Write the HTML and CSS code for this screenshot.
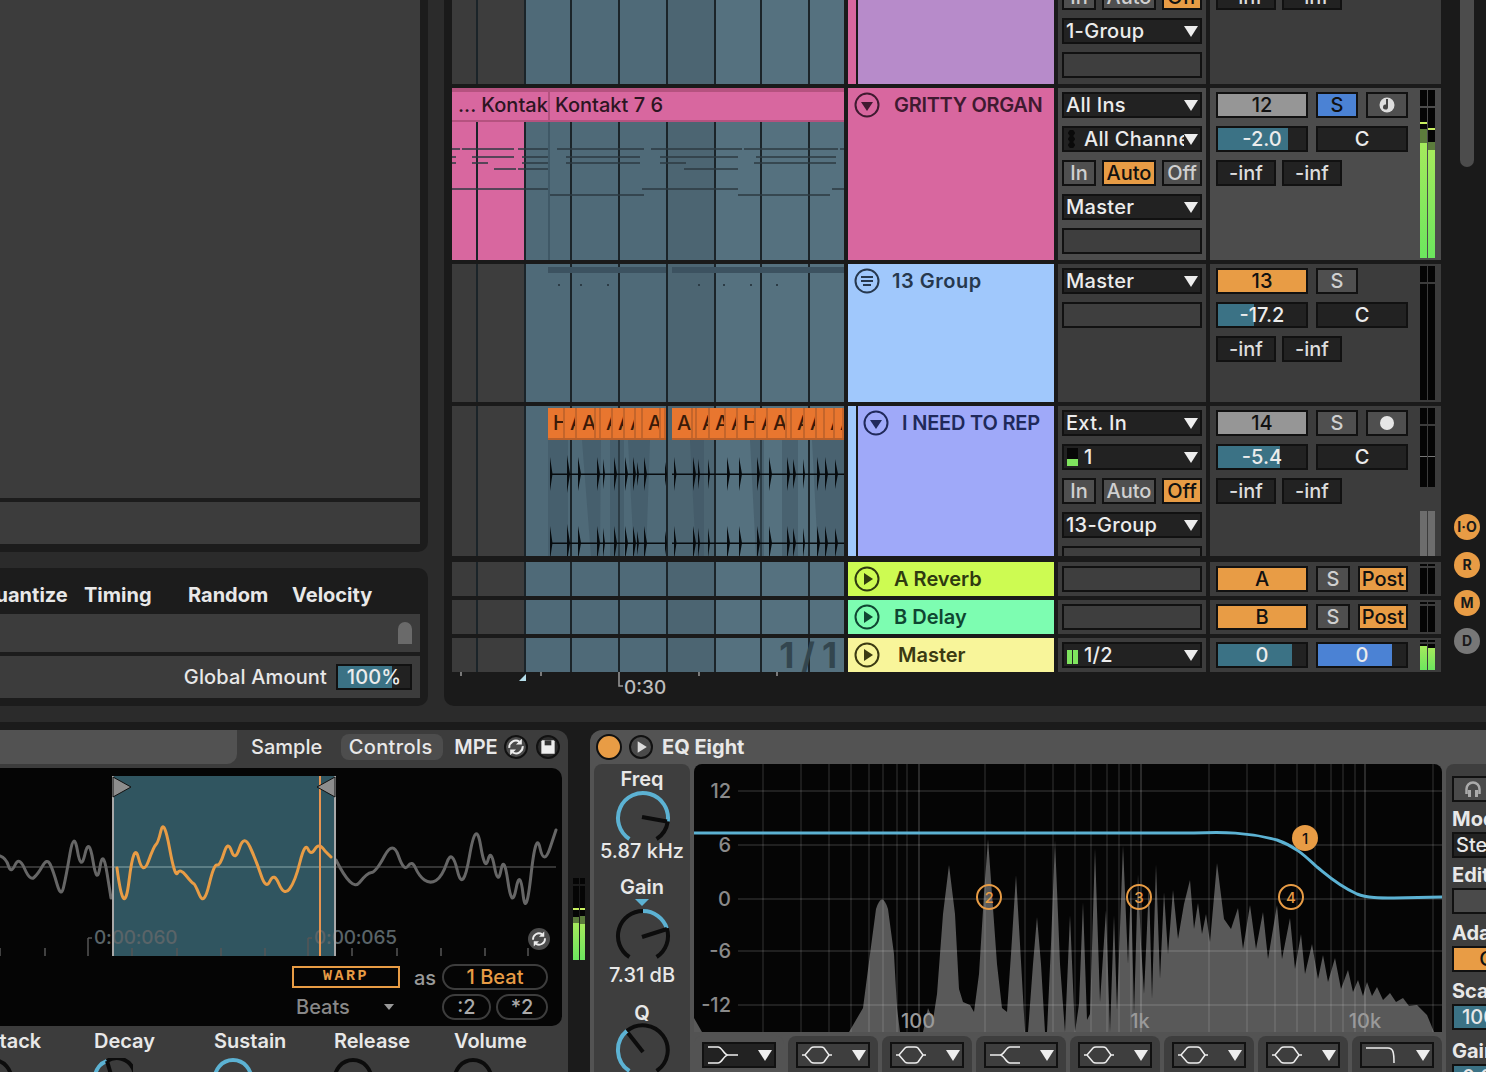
FILE: index.html
```html
<!DOCTYPE html>
<html lang="en">
  <head>
    <meta charset="UTF-8" />
    <meta name="viewport" content="width=device-width, initial-scale=1" />
    <title>Live Set</title>
    <link rel="stylesheet" href="styles.css">
  </head>
  <body>
    <svg class="defs" aria-hidden="true">
      <symbol id="fold-down" viewBox="0 0 26 26">
        <circle cx="13" cy="13" r="11.5" fill="none" stroke="currentColor" stroke-width="2" />
        <path d="M7 10h12l-6 9z" fill="currentColor" />
      </symbol>
      <symbol id="fold-right" viewBox="0 0 26 26">
        <circle cx="13" cy="13" r="11.5" fill="none" stroke="currentColor" stroke-width="2" />
        <path d="M10 7v12l9-6z" fill="currentColor" />
      </symbol>
      <symbol id="fold-group" viewBox="0 0 26 26">
        <circle cx="13" cy="13" r="11.5" fill="none" stroke="currentColor" stroke-width="2" />
        <path d="M7 9h12M7 13h12M9 17h8" fill="none" stroke="currentColor" stroke-width="2" />
      </symbol>
      <symbol id="sync" viewBox="0 0 24 24">
        <path d="M4 13a8 8 0 0 1 12-7.500M20 11a8 8 0 0 1-12 7.500" fill="none" stroke="currentColor" stroke-width="2.400" />
        <path d="M19 2v7h-7zM5 22v-7h7z" fill="currentColor" />
      </symbol>
      <symbol id="f-shelf" viewBox="0 0 30 18">
        <path d="M0 1h10c4 0 6 8 10 8h10M0 17h10c4 0 6-8 10-8" fill="none" stroke="currentColor" stroke-width="1.500" />
      </symbol>
      <symbol id="f-bell" viewBox="0 0 30 18">
        <path d="M0 9h3l6-7c1-1 2-1 3-1h7c1 0 2 0 3 1l5 7h3M3 9l6 7c1 1 2 1 3 1h7c1 0 2 0 3-1l5-7" fill="none" stroke="currentColor" stroke-width="1.500" />
      </symbol>
      <symbol id="f-shelf-r" viewBox="0 0 30 18">
        <path d="M0 9h10c4 0 6-8 10-8h10M10 9c4 0 6 8 10 8h10" fill="none" stroke="currentColor" stroke-width="1.500" />
      </symbol>
      <symbol id="f-low" viewBox="0 0 30 18">
        <path d="M0 2h22c5 0 6 4 6 15" fill="none" stroke="currentColor" stroke-width="1.500" />
      </symbol>
      <symbol id="channel" viewBox="0 0 392 40">
        <path d="M98 19.500h116v1.500H98zM220 19.500h172v1.500H220zM98 3l2.500 17-2.500 17zM115 1l3 19-3 19zM126 3l3 17-3 17zM145 3l3 17-3 17zM151 5l2 15-2 15zM162 3l3 17-3 17zM173 3l3 17-3 17zM181 3l3 17-3 17zM185 8l2 12-2 12zM192 3l3 17-3 17zM213 8l2 12-2 12zM222 3l2.500 17-2.500 17zM241 3l3 17-3 17zM246 5l2 15-2 15zM256 5l2 15-2 15zM275 3l3 17-3 17zM287 3l3 17-3 17zM305 3l3 17-3 17zM317 3l3 17-3 17zM335 3l3 17-3 17zM341 5l3 15-3 15zM351 5l2 15-2 15zM365 3l3 17-3 17zM373 3l3 17-3 17zM383 5l3 15-3 15z" fill="#070b0e" />
      </symbol>
    </svg>

    <div class="top">
      <div class="left-col">
        <div class="left-panel">
          <div class="left-main"></div>
          <div class="left-foot"></div>
        </div>
        <div class="groove">
          <div class="groove-head">
            <span class="gh-q">Quantize</span>
            <span class="gh-t">Timing</span>
            <span class="gh-t">Random</span>
            <span class="gh-v">Velocity</span>
          </div>
          <div class="groove-row"><i class="groove-thumb"></i></div>
          <div class="groove-foot">
            <span>Global Amount</span>
            <div class="box bar-box amount"><i class="bar teal" style="width:54px"></i><b>100%</b></div>
          </div>
        </div>
      </div>

      <div class="arrangement">
        <div class="tracks">
          <!-- cut off by the top of the window -->
          <div class="track first">
            <div class="lane"><i class="cell"></i><i class="cell"></i><i class="cell"></i><i class="cell"></i><i class="cell"></i><i class="cell"></i><i class="cell"></i><i class="cell"></i><i class="cell"></i></div>
            <div class="title nested pink-strip"><div class="title-inner mauve"></div></div>
            <div class="io">
              <div class="box"></div>
              <div class="monitor"><div class="box btn w34">In</div><div class="box btn w54">Auto</div><div class="box btn w40 on">Off</div></div>
              <div class="box drop"><span>1-Group</span></div>
              <div class="box empty"></div>
            </div>
            <div class="mix">
              <div class="mix-controls">
                <div class="mix-row"></div><div class="mix-row"><div class="box inf">-inf</div><div class="box inf">-inf</div></div>
              </div>
              <div class="meter"><div class="meter-bar"><div class="seg"></div></div><div class="meter-bar"><div class="seg"></div></div></div>
            </div>
          </div>

          <div class="track h172">
            <div class="lane">
              <i class="cell pink"></i><i class="cell pink"></i><i class="cell"></i><i class="cell"></i><i class="cell"></i><i class="cell"></i><i class="cell"></i><i class="cell"></i><i class="cell"></i>
              <div class="clip-head">
                <span class="clip-cut">... Kontak</span>
                <span class="clip-name">Kontakt 7 6</span>
              </div>
              <svg class="clip-body" width="392" height="172" viewBox="0 0 392 172">
                <path d="M97 34v138" stroke="#3f5866" stroke-width="2" fill="none" />
                <path d="M0 61h8M10 61h52M66 61h30M105 61h87M199 61h91M292 61h94M388 61h4M0 69h4M20 69h42M70 69h26M114 69h74M208 69h78M304 69h80M0 75h4M20 75h16M70 75h26M114 75h74M208 75h26M302 75h82M42 81h22M66 81h30M232 81h54M0 101h96M190 101h96M380 101h12M98 107h94M286 107h92" stroke="#2d3a42" stroke-width="1.500" fill="none" />
              </svg>
            </div>
            <div class="title pink"><div class="title-top gritty"><svg class="fold"><use href="#fold-down" /></svg><span>GRITTY ORGAN</span></div></div>
            <div class="io selected">
              <div class="box drop"><span>All Ins</span></div>
              <div class="box drop"><i class="dots"></i><span class="ind">All Channels</span></div>
              <div class="monitor"><div class="box btn w34">In</div><div class="box btn w54 on">Auto</div><div class="box btn w40">Off</div></div>
              <div class="box drop"><span>Master</span></div>
              <div class="box empty"></div>
            </div>
            <div class="mix selected">
              <div class="mix-controls">
                <div class="mix-row">
                  <div class="box num">12</div>
                  <div class="box btn w42 solo">S</div>
                  <div class="box btn w42"><svg class="arm" viewBox="0 0 18 18"><circle cx="9" cy="9" r="7.500" fill="#ddd" /><path d="M10 3v8a2.500 2.500 0 1 1-2-2.400V3z" fill="#444" /></svg></div>
                </div>
                <div class="mix-row">
                  <div class="box bar-box w92"><i class="bar teal" style="width:70px"></i><b>-2.0</b></div>
                  <div class="box bar-box w92"><b>C</b></div>
                </div>
                <div class="mix-row"><div class="box inf">-inf</div><div class="box inf">-inf</div></div>
              </div>
              <div class="meter">
                <div class="meter-bar"><div class="seg"></div><div class="seg main"><i class="peak" style="margin-bottom:5px"></i><i class="hold" style="height:14px"></i><i class="level" style="height:115px"></i></div></div>
                <div class="meter-bar"><div class="seg"></div><div class="seg main"><i class="peak" style="margin-bottom:12px"></i><i class="hold" style="height:8px"></i><i class="level" style="height:108px"></i></div></div>
              </div>
            </div>
          </div>

          <div class="track h138">
            <div class="lane">
              <i class="cell"></i><i class="cell"></i><i class="cell"></i><i class="cell"></i><i class="cell"></i><i class="cell"></i><i class="cell"></i><i class="cell"></i><i class="cell"></i>
              <svg class="clip-body" width="392" height="138" viewBox="0 0 392 138">
                <path d="M96 3h118v6H96zM220 3h172v6H220z" fill="#3c5260" />
                <path d="M106 20h2v2h-2zM128 20h2v2h-2zM155 20h2v2h-2zM246 20h2v2h-2zM271 20h2v2h-2zM298 20h2v2h-2zM324 20h2v2h-2z" fill="#2c3c46" />
              </svg>
            </div>
            <div class="title blue"><div class="title-top group"><svg class="fold"><use href="#fold-group" /></svg><span>13 Group</span></div></div>
            <div class="io">
              <div class="box drop"><span>Master</span></div>
              <div class="box empty"></div>
            </div>
            <div class="mix">
              <div class="mix-controls">
                <div class="mix-row"><div class="box num orange">13</div><div class="box btn w42">S</div></div>
                <div class="mix-row">
                  <div class="box bar-box w92"><i class="bar teal" style="width:36px"></i><b>-17.2</b></div>
                  <div class="box bar-box w92"><b>C</b></div>
                </div>
                <div class="mix-row"><div class="box inf">-inf</div><div class="box inf">-inf</div></div>
              </div>
              <div class="meter"><div class="meter-bar"><div class="seg"></div><div class="seg main"></div></div><div class="meter-bar"><div class="seg"></div><div class="seg main"></div></div></div>
            </div>
          </div>

          <div class="track h150">
            <div class="lane">
              <i class="cell"></i><i class="cell"></i><i class="cell"></i><i class="cell"></i><i class="cell"></i><i class="cell"></i><i class="cell"></i><i class="cell"></i><i class="cell"></i>
              <svg class="clip-body" width="392" height="150" viewBox="0 0 392 150">
                <path d="M96 34h20v116H96zM130 34l9 116h9l1-116zM158 34h14v116h-14zM176 34l6 116h12l4-116zM238 34l6 116h8V34zM298 34l6 116h8V34zM330 34h16v116h-16zM360 34l6 116h26V34z" fill="#3d5462" opacity=".5" />
                <use href="#channel" x="0" y="48" width="392" height="40" />
                <use href="#channel" x="0" y="117" width="392" height="40" />
              </svg>
              <div class="slices">
                <div class="slice-clip">
                  <span style="width:17px">H</span><span style="width:12px">A</span><span style="width:19px">A</span><span style="width:5px"></span><span style="width:12px">A</span><span style="width:12px">A</span><span style="width:11px">A</span><span style="width:7px"></span><span style="width:18px">A</span><span style="width:5px"></span>
                </div>
                <div class="slice-clip">
                  <span style="width:21px">A</span><span style="width:4px"></span><span style="width:13px">A</span><span style="width:16px">A</span><span style="width:12px">A</span><span style="width:18px">H</span><span style="width:12px">A</span><span style="width:19px">A</span><span style="width:5px"></span><span style="width:13px">A</span><span style="width:12px">A</span><span style="width:8px"></span><span style="width:10px">A</span><span style="width:9px">A</span>
                </div>
              </div>
            </div>
            <div class="title nested blue-strip"><div class="title-inner periwinkle"><div class="title-top rep"><svg class="fold"><use href="#fold-down" /></svg><span>I NEED TO REP</span></div></div></div>
            <div class="io">
              <div class="box drop"><span>Ext. In</span></div>
              <div class="box drop"><i class="mini"><i style="height:7px"></i></i><span class="ind-s">1</span></div>
              <div class="monitor"><div class="box btn w34">In</div><div class="box btn w54">Auto</div><div class="box btn w40 on">Off</div></div>
              <div class="box drop"><span>13-Group</span></div>
              <div class="box empty"></div>
            </div>
            <div class="mix">
              <div class="mix-controls">
                <div class="mix-row">
                  <div class="box num">14</div>
                  <div class="box btn w42">S</div>
                  <div class="box btn w42"><i class="rec"></i></div>
                </div>
                <div class="mix-row">
                  <div class="box bar-box w92"><i class="bar teal" style="width:62px"></i><b>-5.4</b></div>
                  <div class="box bar-box w92"><b>C</b></div>
                </div>
                <div class="mix-row"><div class="box inf">-inf</div><div class="box inf">-inf</div></div>
              </div>
              <div class="meter tail">
                <div class="meter-bar"><div class="seg"></div><div class="seg main"><i class="tick" style="margin-bottom:30px"></i><i class="gap" style="height:24px"></i><i class="level gray" style="height:45px"></i></div></div>
                <div class="meter-bar"><div class="seg"></div><div class="seg main"><i class="tick" style="margin-bottom:30px"></i><i class="gap" style="height:24px"></i><i class="level gray" style="height:45px"></i></div></div>
              </div>
            </div>
          </div>

          <div class="track h34 first-send">
            <div class="lane"><i class="cell"></i><i class="cell"></i><i class="cell"></i><i class="cell"></i><i class="cell"></i><i class="cell"></i><i class="cell"></i><i class="cell"></i><i class="cell"></i></div>
            <div class="title lime"><div class="title-top send"><svg class="fold"><use href="#fold-right" /></svg><span>A Reverb</span></div></div>
            <div class="io"><div class="box empty"></div></div>
            <div class="mix">
              <div class="mix-controls">
                <div class="mix-row"><div class="box num orange">A</div><div class="box btn w34">S</div><div class="box btn w50 on">Post</div></div>
              </div>
              <div class="meter short"><div class="meter-bar"><div class="seg"></div><div class="seg main"></div></div><div class="meter-bar"><div class="seg"></div><div class="seg main"></div></div></div>
            </div>
          </div>

          <div class="track h34">
            <div class="lane"><i class="cell"></i><i class="cell"></i><i class="cell"></i><i class="cell"></i><i class="cell"></i><i class="cell"></i><i class="cell"></i><i class="cell"></i><i class="cell"></i></div>
            <div class="title mint"><div class="title-top send"><svg class="fold"><use href="#fold-right" /></svg><span>B Delay</span></div></div>
            <div class="io"><div class="box empty"></div></div>
            <div class="mix">
              <div class="mix-controls">
                <div class="mix-row"><div class="box num orange">B</div><div class="box btn w34">S</div><div class="box btn w50 on">Post</div></div>
              </div>
              <div class="meter short"><div class="meter-bar"><div class="seg"></div><div class="seg main"></div></div><div class="meter-bar"><div class="seg"></div><div class="seg main"></div></div></div>
            </div>
          </div>

          <div class="track h34">
            <div class="lane">
              <i class="cell"></i><i class="cell"></i><i class="cell"></i><i class="cell"></i><i class="cell"></i><i class="cell"></i><i class="cell"></i><i class="cell"></i><i class="cell"></i>
              <span class="loop-len">1/1</span>
            </div>
            <div class="title butter"><div class="title-top send master"><svg class="fold"><use href="#fold-right" /></svg><span>Master</span></div></div>
            <div class="io">
              <div class="box drop"><i class="mini pair"><i style="height:14px"></i><i style="height:14px"></i></i><span class="ind-s">1/2</span></div>
            </div>
            <div class="mix">
              <div class="mix-controls">
                <div class="mix-row">
                  <div class="box bar-box w92"><i class="bar teal" style="width:74px"></i><b>0</b></div>
                  <div class="box bar-box w92"><i class="bar azure" style="width:74px"></i><b>0</b></div>
                </div>
              </div>
              <div class="meter short">
                <div class="meter-bar"><div class="seg"></div><div class="seg main"><i class="level" style="height:24px"></i></div></div>
                <div class="meter-bar"><div class="seg"></div><div class="seg main"><i class="level" style="height:22px"></i></div></div>
              </div>
            </div>
          </div>

          <svg class="ruler" width="392" height="34" viewBox="0 0 392 34">
            <path d="M9 0v4M89 0v4M247 0v4M325 0v4" stroke="#9a9a9a" stroke-width="1.500" />
            <path d="M167 0v14h4" stroke="#9a9a9a" stroke-width="1.500" fill="none" />
            <path d="M74 2v7h-7z" fill="#b5dde9" />
            <text x="172" y="22" class="ruler-text">0:30</text>
          </svg>
        </div>

        <div class="side">
          <div class="scroll-thumb"></div>
          <div class="side-btns">
            <div class="side-btn">I·O</div>
            <div class="side-btn">R</div>
            <div class="side-btn">M</div>
            <div class="side-btn off">D</div>
          </div>
        </div>
      </div>
    </div>

    <div class="devices">
      <div class="sampler">
        <div class="dev-tabs">
          <div class="tab-fill"></div>
          <div class="tab-sample">Sample</div>
          <div class="tab-pill">Controls</div>
          <div class="tab-mpe">MPE</div>
          <div class="round-btn"><svg viewBox="0 0 24 24"><use href="#sync" /></svg></div>
          <div class="round-btn save"><svg viewBox="0 0 24 24"><path d="M5 4h14l1 1v15H4V5z" fill="#eee" /><path d="M8 4h8v6H8z" fill="#333" /></svg></div>
        </div>
        <div class="wave-panel">
          <svg class="wave" width="562" height="188" viewBox="0 0 562 188">
            <rect x="113" y="8" width="222" height="180" fill="#305560" />
            <path d="M0 99h113M335 99h221" stroke="#444" stroke-width="1.500" />
            <path d="M113 99h222" stroke="#6b8c92" stroke-width="1.500" />
            <path d="M0 180v8M45 180v8M88 170v18M88 170h4M132 180v8M177 180v8M221 180v8M265 180v8M308 170v18M308 170h4M352 180v8M397 180v8M441 180v8M485 180v8M528 180v8" stroke="#555" stroke-width="1.500" fill="none" />
            <text x="94" y="176" class="wave-time">0:00:060</text>
            <text x="314" y="176" class="wave-time">0:00:065</text>
            <path d="M0 88Q6 90 8.500 98Q11 106 15 97Q19 88 24.500 100.500Q30 113 34 109.500Q38 106 42.500 98Q47 90 50 96Q53 102 57 116Q61 130 63.500 119.500Q66 109 70 85.500Q74 62 77.500 83Q81 104 85 86Q89 68 93 93Q97 118 100 99Q103 80 107 105L111 130" class="wave-off" />
            <path d="M336 92Q352 124 359.500 114.500Q367 105 371.500 104.500Q376 104 384.500 88Q393 72 398.500 88Q404 104 408 98Q412 92 415.500 100Q419 108 424.500 112Q430 116 436 112.500Q442 109 447 94.500Q452 80 457.500 103Q463 126 469.500 88Q476 50 480.500 77Q485 104 488 92Q491 80 494.500 99Q498 118 501 102Q504 86 508 114Q512 142 516 121Q520 100 523 126Q526 152 531 107Q536 62 540 80Q544 98 550 80L556 62" class="wave-off" />
            <path d="M117 100Q124 154 129 113Q134 72 138.500 90Q143 108 148.500 93Q154 78 156 76.500Q158 75 161 62.500Q164 50 169.500 80Q175 110 177.500 105Q180 100 186 107.500Q192 115 193.500 115.500Q195 116 199.500 127Q204 138 209 117Q214 96 217 97Q220 98 224 85Q228 72 231.500 83Q235 94 239.500 80Q244 66 250 79Q256 92 261 107Q266 122 270 113Q274 104 279 116Q284 128 289.500 121Q295 114 300 94Q305 74 308 81Q311 88 315 81Q319 74 325 83L331 89" class="wave-on" />
            <path d="M320 8v180" stroke="#e8944f" stroke-width="2" />
            <path d="M113 8v180M335 8v180" stroke="#a8a8a8" stroke-width="2" />
            <path d="M113 9l18 10-18 10zM335 9l-18 10 18 10z" fill="#8d8d8d" stroke="#111" />
            <circle cx="539" cy="171" r="11" fill="#4c4c4c" />
            <svg x="530" y="162" width="18" height="18" viewBox="0 0 24 24" color="#eee"><use href="#sync" /></svg>
          </svg>
          <div class="warp-grid">
            <div class="warp">WARP</div>
            <div class="warp-as">as</div>
            <div class="pill beat">1 Beat</div>
            <div class="beats"><span>Beats</span><i></i></div>
            <div class="pills">
              <div class="pill half">:2</div>
              <div class="pill dbl">*2</div>
            </div>
          </div>
        </div>
        <div class="adsr">
          <div class="env env-a"><span>Attack</span>
            <svg class="knob-s" viewBox="0 0 40 40"><path d="M10.200 35.100A18 18 0 1 1 29.800 35.100" class="k-off" /></svg>
          </div>
          <div class="env"><span>Decay</span>
            <svg class="knob-s" viewBox="0 0 40 40"><path d="M10.200 35.100A18 18 0 0 1 14 3" class="k-on" /><path d="M14 3A18 18 0 1 1 29.800 35.100" class="k-off" /><path d="M19 20L14 3" class="k-off" /></svg>
          </div>
          <div class="env"><span>Sustain</span>
            <svg class="knob-s" viewBox="0 0 40 40"><path d="M10.200 35.100A18 18 0 1 1 29.800 35.100" class="k-on" /></svg>
          </div>
          <div class="env"><span>Release</span>
            <svg class="knob-s" viewBox="0 0 40 40"><path d="M10.200 35.100A18 18 0 1 1 29.800 35.100" class="k-off" /></svg>
          </div>
          <div class="env"><span>Volume</span>
            <svg class="knob-s" viewBox="0 0 40 40"><path d="M10.200 35.100A18 18 0 1 1 29.800 35.100" class="k-off" /></svg>
          </div>
        </div>
      </div>

      <div class="dev-meter">
        <div class="meter-bar thin"><div class="seg"></div><div class="seg main"><i class="peak" style="margin-bottom:7px"></i><i class="hold" style="height:6px"></i><i class="level" style="height:37px"></i></div></div>
        <div class="meter-bar thin"><div class="seg"></div><div class="seg main"><i class="peak" style="margin-bottom:6px"></i><i class="hold" style="height:8px"></i><i class="level" style="height:36px"></i></div></div>
      </div>

      <div class="eq">
        <div class="eq-head">
          <div class="eq-power"></div>
          <div class="round-btn play"><svg viewBox="0 0 24 24"><path d="M8 5v14l11-7z" fill="#ddd" /></svg></div>
          <span class="eq-name">EQ Eight</span>
        </div>
        <div class="eq-body">
          <div class="eq-knobs">
            <span class="k-label">Freq</span>
            <svg class="knob" viewBox="0 0 56 56"><path d="M14.400 49A25 25 0 1 1 52.750 31.500" class="k-on" /><path d="M52.750 31.500A25 25 0 0 1 41.600 49" class="k-off" /><path d="M27 27L52 31.500" class="k-needle" /></svg>
            <span class="k-value freq-v">5.87 kHz</span>
            <span class="k-label gain">Gain</span>
            <i class="k-mark"></i>
            <svg class="knob" viewBox="0 0 56 56"><path d="M14.400 49A25 25 0 0 1 28 3" class="k-off" /><path d="M28 3A25 25 0 0 1 51.800 20.300" class="k-on" /><path d="M51.800 20.300A25 25 0 0 1 41.600 49" class="k-off" /><path d="M27 29L52 21" class="k-needle" /></svg>
            <span class="k-value gain-v">7.31 dB</span>
            <span class="k-label q">Q</span>
            <svg class="knob" viewBox="0 0 56 56"><path d="M14.400 49A25 25 0 0 1 11.900 8.850" class="k-on" /><path d="M11.900 8.850A25 25 0 1 1 41.600 49" class="k-off" /><path d="M28 30L13 11" class="k-needle" /></svg>
          </div>

          <div class="eq-center">
            <svg class="eq-graph" width="748" height="268" viewBox="0 0 748 268">
              <path d="M0 268V254L8 268H155L169 244L176 190L182 145Q188 126 194 145L200 190L203 244L206 268H229L234 244L239 256L243 230L249 150L255 101L261 150L265 225L269 238L276 241L280 248L285 210L290 130L294 75L298 130L303 200L308 244L313 248L317 190L322 111L326 180L331 268H334L339 200L343 153L347 200L351 268H353L357 180L361 76L366 200L371 268L376 151L381 268L385 240L389 138L393 256L396 250L401 84L406 238L412 146L416 268L420 151L423 246L429 81L434 200L437 120L440 250L444 110L447 180L450 230L455 120L458 235L462 100L466 215L470 128L474 190L479 126L484 175L490 140L496 116L500 165L504 139L508 170L512 150L516 178L523 99L530 155L537 165L544 144L549 185L556 141L562 185L569 148L574 195L583 141L588 195L596 154L601 205L607 170L611 210L618 180L624 215L629 191L634 218L641 194L647 225L654 206L659 228L664 216L669 232L673 218L678 232L683 223L689 236L696 229L702 238L709 234L715 242L723 241L733 251L740 268Z" fill="#595959" />
              <path d="M69 0v268M107 0v268M135 0v268M157 0v268M175 0v268M189 0v268M203 0v268M213 0v268M291 0v268M331 0v268M359 0v268M381 0v268M397 0v268M413 0v268M425 0v268M437 0v268M515 0v268M553 0v268M581 0v268M603 0v268M621 0v268M637 0v268M649 0v268M661 0v268M739 0v268" stroke="#fff" stroke-opacity=".13" stroke-width="1.500" />
              <path d="M225 0v268M447 0v268M671 0v268" stroke="#fff" stroke-opacity=".2" stroke-width="1.500" />
              <path d="M44 27h704M44 81h704M44 135h704M44 187h704M44 241h704" stroke="#fff" stroke-opacity=".15" stroke-width="1.500" />
              <text x="37" y="34" class="eq-db">12</text>
              <text x="37" y="88" class="eq-db">6</text>
              <text x="37" y="142" class="eq-db">0</text>
              <text x="37" y="194" class="eq-db">-6</text>
              <text x="37" y="248" class="eq-db">-12</text>
              <text x="224" y="264" class="eq-hz">100</text>
              <text x="446" y="264" class="eq-hz">1k</text>
              <text x="671" y="264" class="eq-hz">10k</text>
              <path d="M0 69H500C530 68 553 68 583 76C603 83 613 94 623 103C633 111 643 121 663 130C673 134 686 134 700 134L748 133" fill="none" stroke="#5cb2d3" stroke-width="3" />
              <circle cx="611" cy="74" r="13" fill="#e89c45" />
              <text x="611" y="80" class="eq-dot dark">1</text>
              <circle cx="295" cy="133" r="12" class="eq-ring" /><text x="295" y="139" class="eq-dot">2</text>
              <circle cx="445" cy="133" r="12" class="eq-ring" /><text x="445" y="139" class="eq-dot">3</text>
              <circle cx="597" cy="133" r="12" class="eq-ring" /><text x="597" y="139" class="eq-dot">4</text>
            </svg>
            <div class="f-tabs">
              <div class="f-tab active"><div class="f-box"><svg class="f-ic"><use href="#f-shelf" /></svg></div></div>
              <div class="f-tab"><div class="f-box"><svg class="f-ic"><use href="#f-bell" /></svg></div></div>
              <div class="f-tab"><div class="f-box"><svg class="f-ic"><use href="#f-bell" /></svg></div></div>
              <div class="f-tab"><div class="f-box"><svg class="f-ic"><use href="#f-shelf-r" /></svg></div></div>
              <div class="f-tab"><div class="f-box"><svg class="f-ic"><use href="#f-bell" /></svg></div></div>
              <div class="f-tab"><div class="f-box"><svg class="f-ic"><use href="#f-bell" /></svg></div></div>
              <div class="f-tab"><div class="f-box"><svg class="f-ic"><use href="#f-bell" /></svg></div></div>
              <div class="f-tab"><div class="f-box"><svg class="f-ic"><use href="#f-low" /></svg></div></div>
            </div>
          </div>

          <div class="eq-side">
            <div class="side-box hp"><svg width="20" height="20" viewBox="0 0 20 20"><path d="M3.500 15V10a6.500 6.500 0 0 1 13 0v5" fill="none" stroke="#aaa" stroke-width="2.500" /><path d="M5 11h3v7H5zM12 11h3v7h-3z" fill="#aaa" /></svg></div>
            <span class="side-label">Mode</span>
            <div class="side-box dark">Stereo</div>
            <span class="side-label">Edit</span>
            <div class="side-box"></div>
            <span class="side-label tall">Adapt. Q</span>
            <div class="side-box amber">On</div>
            <span class="side-label tall">Scale</span>
            <div class="side-box tealish">100 %</div>
            <span class="side-label taller">Gain</span>
            <div class="side-box tealish">0.00 dB</div>
          </div>
        </div>
      </div>
    </div>
  </body>
</html>
```

FILE: styles.css
```css
* {
  box-sizing: border-box;
}
html,
body {
  margin: 0;
  height: 100%;
}
body {
  width: 1486px;
  height: 1072px;
  overflow: hidden;
  background: #2b2b2b;
  color: #e8e8e8;
  font-family: Inter, "Noto Sans", sans-serif;
  font-size: 20px;
  font-weight: 500;
  line-height: 26px;
}
i {
  display: block;
  font-style: normal;
}
.defs {
  position: absolute;
  width: 0;
  height: 0;
}

/* top half */
.top {
  display: flex;
  gap: 16px;
  height: 722px;
}
.left-col {
  width: 428px;
  flex: none;
  display: flex;
  flex-direction: column;
  gap: 16px;
}
.left-panel {
  height: 552px;
  background: #1c1c1c;
  padding: 0 8px 8px 0;
  border-bottom-right-radius: 10px;
  display: flex;
  flex-direction: column;
  gap: 4px;
}
.left-main {
  height: 498px;
  background: #3c3c3c;
}
.left-foot {
  flex: 1;
  background: #3c3c3c;
}
.groove {
  height: 138px;
  background: #1c1c1c;
  padding: 8px 8px 8px 0;
  border-radius: 0 10px 10px 0;
  display: flex;
  flex-direction: column;
}
.groove-head {
  height: 38px;
  display: flex;
  align-items: center;
  justify-content: flex-end;
  font-weight: 700;
}
.gh-q {
  width: 84px;
  flex: none;
  white-space: nowrap;
  margin-right: 20px;
  direction: rtl;
  unicode-bidi: plaintext;
  text-align: right;
}
.gh-t {
  width: 104px;
  flex: none;
}
.gh-v {
  width: 128px;
  flex: none;
}
.groove-row {
  height: 38px;
  background: #3c3c3c;
  display: flex;
  justify-content: flex-end;
  align-items: flex-end;
  padding: 0 8px 8px 0;
}
.groove-thumb {
  width: 14px;
  height: 22px;
  background: #6a6a6a;
  border-radius: 7px 7px 0 0;
}
.groove-foot {
  height: 42px;
  margin-top: 4px;
  background: #3c3c3c;
  display: flex;
  justify-content: flex-end;
  align-items: center;
  gap: 9px;
  padding-right: 8px;
  letter-spacing: 0.15px;
}

/* arrangement */
.arrangement {
  flex: 1;
  height: 706px;
  background: #1a1a1a;
  padding-left: 8px;
  border-bottom-left-radius: 10px;
  display: flex;
  overflow: hidden;
}
.tracks {
  display: flex;
  flex-direction: column;
  gap: 4px;
  width: 989px;
  flex: none;
}
.track {
  display: grid;
  grid-template-columns: 392px 206px 148px 231px;
  column-gap: 4px;
  flex: none;
  overflow: hidden;
}
.first {
  height: 138px;
  margin-top: -54px;
}
.h172 {
  height: 172px;
}
.h138 {
  height: 138px;
}
.h150 {
  height: 150px;
}
.h34 {
  height: 34px;
}
.first-send {
  margin-top: 2px;
}
.ruler {
  margin-top: -4px;
  flex: none;
}
.ruler-text {
  font: 500 19px Inter, sans-serif;
  fill: #bdbdbd;
}

.lane {
  position: relative;
  display: flex;
  overflow: hidden;
}
.cell {
  flex: none;
  height: 100%;
  background: #4f6a78;
  border-right: 2px solid #1b2429;
}
.cell:nth-child(1) {
  width: 26px;
  background: #3b3b3b;
}
.cell:nth-child(2) {
  width: 48px;
  background: #3d3d3d;
}
.cell:nth-child(3) {
  width: 46px;
}
.cell:nth-child(4),
.cell:nth-child(5) {
  width: 48px;
}
.cell:nth-child(6) {
  width: 48px;
  background: #4c6572;
}
.cell:nth-child(7) {
  width: 46px;
  background: #55717f;
}
.cell:nth-child(8) {
  width: 48px;
  background: #55717f;
}
.cell:nth-child(9) {
  width: 34px;
  background: #55717f;
  border-right: 0;
}
.cell.pink {
  background: #d8679f;
}
.clip-head {
  position: absolute;
  left: 0;
  right: 0;
  top: 0;
  height: 34px;
  display: flex;
  background: #d8679f;
  border-top: 4px solid #b5527f;
  border-bottom: 2px solid #b5527f;
  color: #2c1522;
  line-height: 26px;
}
.clip-cut {
  width: 98px;
  flex: none;
  padding-left: 6px;
  overflow: hidden;
  white-space: nowrap;
  border-right: 2px solid #b5527f;
}
.clip-name {
  padding-left: 5px;
}
.clip-body {
  position: absolute;
  left: 0;
  top: 0;
}
.slices {
  position: absolute;
  left: 96px;
  top: 2px;
  right: 0;
  display: flex;
  gap: 6px;
}
.slice-clip {
  display: flex;
  height: 32px;
  background: #e8762f;
  border-bottom: 2px solid #b85f2a;
  color: #3a1a08;
  line-height: 30px;
  flex: none;
}
.slice-clip span {
  flex: none;
  overflow: hidden;
  text-indent: 5px;
  white-space: nowrap;
  border-right: 2px solid #c4652b;
}
.loop-len {
  position: absolute;
  right: 7px;
  top: 0;
  font-size: 35px;
  line-height: 34px;
  font-weight: 700;
  letter-spacing: 7px;
  margin-right: -7px;
  color: #33464f;
}

/* track titles */
.title {
  position: relative;
  overflow: visible;
}
.title-top {
  height: 34px;
  display: flex;
  align-items: center;
  gap: 14px;
  padding-left: 6px;
  white-space: nowrap;
  font-weight: 600;
}
.fold {
  width: 26px;
  height: 26px;
  flex: none;
}
.pink {
  background: #d8679f;
}
.blue {
  background: #a0c8fc;
}
.lime {
  background: #cdfb52;
}
.mint {
  background: #7dfdb1;
}
.butter {
  background: #f8f59a;
}
.mauve {
  background: #b78bca;
}
.periwinkle {
  background: #9fa9f9;
}
.pink-strip {
  background: #d8679f;
}
.blue-strip {
  background: #a0c8fc;
}
.nested {
  padding-left: 8px;
}
.blue-strip::before {
  content: "";
  position: absolute;
  left: 0;
  top: -4px;
  width: 8px;
  height: 4px;
  background: #a0c8fc;
}
.title-inner {
  height: 100%;
  border-left: 2px solid #1a1a1a;
}
.gritty {
  color: #3f1a30;
  letter-spacing: -0.3px;
}
.group {
  color: #26384e;
  letter-spacing: 0.5px;
}
.group .fold {
  margin-right: -2px;
}
.rep {
  color: #20295a;
  padding-left: 5px;
  gap: 13px;
  letter-spacing: -0.2px;
}
.send {
  color: #2f3a10;
}
.mint .send {
  color: #0f4632;
}
.master {
  color: #3b3a12;
  gap: 18px;
}

/* boxes */
.box {
  height: 26px;
  border: 2px solid #111;
  background: #222;
  line-height: 22px;
  flex: none;
}
.empty {
  background: #3e3e3e;
}
.drop {
  display: flex;
  align-items: center;
  padding: 0 2px 0 2px;
  color: #ececec;
  white-space: nowrap;
  position: relative;
  letter-spacing: 0.3px;
}
.drop span {
  flex: 1;
  min-width: 0;
  overflow: hidden;
}
.drop::after {
  content: "";
  flex: none;
  width: 0;
  height: 0;
  border-left: 7px solid transparent;
  border-right: 7px solid transparent;
  border-top: 11px solid #eee;
}
.drop .ind {
  padding-left: 5px;
}
.drop .ind-s {
  padding-left: 6px;
}
.dots {
  width: 9px;
  height: 18px;
  margin-left: 1px;
  flex: none;
  background: radial-gradient(circle, #0a0a0a 3px, transparent 3.5px) 0 0 / 9px 6px;
  margin-right: 3px;
}
.mini {
  width: 11px;
  height: 18px;
  flex: none;
  margin-left: 1px;
  background: #070707;
  display: flex;
  gap: 1px;
  align-items: flex-end;
}
.mini i {
  flex: 1;
  background: #7fe45e;
}
.mini.pair {
  background: none;
}
.io {
  background: #3c3c3c;
  padding: 4px;
  display: flex;
  flex-direction: column;
  gap: 8px;
  overflow: hidden;
}
.selected {
  background: #4c4c4c;
}
.monitor {
  display: flex;
  gap: 6px;
  flex: none;
}
.btn {
  background: #4f4f4f;
  color: #d0d0d0;
  text-align: center;
  display: flex;
  align-items: center;
  justify-content: center;
}
.btn.on {
  background: #e89c45;
  color: #111;
}
.btn.solo {
  background: #4b82d4;
  color: #111;
}
.w34 {
  width: 34px;
}
.w40 {
  width: 40px;
}
.w42 {
  width: 42px;
}
.w50 {
  width: 50px;
}
.w54 {
  width: 54px;
}
.w92 {
  width: 92px;
}

/* mixer */
.mix {
  background: #3c3c3c;
  padding: 4px 6px;
  display: flex;
  justify-content: space-between;
}
.mix.selected {
  background: #4c4c4c;
}
.mix-controls {
  width: 192px;
  flex: none;
  display: flex;
  flex-direction: column;
  gap: 8px;
}
.mix-row {
  height: 26px;
  display: flex;
  gap: 8px;
  flex: none;
}
.num {
  width: 92px;
  background: #969696;
  color: #111;
  text-align: center;
}
.num.orange {
  background: #e89c45;
}
.inf {
  width: 60px;
  color: #ddd;
  text-align: center;
  margin-right: -2px;
}
.bar-box {
  position: relative;
  display: flex;
  align-items: center;
  justify-content: center;
}
.bar-box b {
  position: relative;
  font-weight: 500;
  color: #ececec;
}
.bar {
  position: absolute;
  left: 0;
  top: 0;
  bottom: 0;
}
.teal {
  background: #3b7285;
}
.azure {
  background: #4b82d4;
}
.amount {
  width: 76px;
}
.arm {
  width: 18px;
  height: 18px;
}
.rec {
  width: 14px;
  height: 14px;
  border-radius: 50%;
  background: #e6e6e6;
}
.meter {
  width: 15px;
  flex: none;
  display: flex;
  gap: 1px;
  margin: -2px 0;
}
.meter.tail {
  margin-bottom: -4px;
}
.meter-bar {
  flex: 1;
  display: flex;
  flex-direction: column;
  gap: 2px;
}
.seg {
  height: 16px;
  background: #050505;
  flex: none;
}
.short .seg {
  height: 2px;
}
.seg.main {
  flex: 1;
  display: flex;
  flex-direction: column;
  justify-content: flex-end;
}
.peak {
  height: 2px;
  background: #c8f060;
}
.hold {
  background: #5c7c3c;
}
.level {
  background: linear-gradient(#a5ea5c, #6ce65e);
}
.level.gray {
  background: #6d6d6d;
}
.gap {
  background: #3c3c3c;
}
.tick {
  height: 1px;
  background: #777;
}
.first .meter {
  margin-bottom: 0;
}

/* right hand column */
.side {
  width: 26px;
  flex: none;
  margin-left: 13px;
  display: flex;
  flex-direction: column;
  align-items: center;
}
.scroll-thumb {
  width: 14px;
  height: 167px;
  background: #4c4c4c;
  border-radius: 0 0 7px 7px;
}
.side-btns {
  margin-top: 347px;
  display: flex;
  flex-direction: column;
  gap: 12px;
}
.side-btn {
  width: 26px;
  height: 26px;
  border-radius: 50%;
  background: #e89c45;
  color: #1a1a1a;
  text-align: center;
  font-size: 14px;
  font-weight: 700;
  white-space: nowrap;
}
.side-btn.off {
  background: #777;
}

/* devices */
.devices {
  height: 350px;
  background: #1b1b1b;
  padding-top: 8px;
  display: flex;
  overflow: hidden;
}
.sampler {
  width: 568px;
  flex: none;
  background: #3c3c3c;
  border-top-right-radius: 12px;
}
.dev-tabs {
  height: 38px;
  display: flex;
  align-items: flex-start;
}
.tab-fill {
  width: 238px;
  height: 34px;
  background: #525252;
  border-bottom-right-radius: 10px;
}
.tab-sample {
  width: 98px;
  padding: 4px 0 0 14px;
}
.tab-pill {
  width: 103px;
  height: 26px;
  margin: 4px 11px 0 6px;
  padding-left: 8px;
  background: #4d4d4d;
  border-radius: 8px;
  letter-spacing: 0.4px;
  white-space: nowrap;
}
.tab-mpe {
  width: 50px;
  padding-top: 4px;
  font-weight: 600;
}
.round-btn {
  width: 24px;
  height: 24px;
  flex: none;
  border-radius: 50%;
  border: 2px solid #111;
  background: #4a4a4a;
  color: #eee;
  margin: 5px 8px 0 0;
}
.round-btn svg {
  display: block;
  width: 20px;
  height: 20px;
}
.save {
  background: #2c2c2c;
}
.wave-panel {
  width: 562px;
  height: 258px;
  background: #050505;
  border-radius: 0 10px 10px 0;
}
.wave {
  display: block;
}
.wave-time {
  font: 500 19px Inter, sans-serif;
  fill: #5a6468;
  letter-spacing: -0.2px;
}
.wave-off,
.wave-on {
  fill: none;
  stroke-width: 3;
  stroke-linejoin: round;
  stroke-linecap: round;
}
.wave-off {
  stroke: #666;
}
.wave-on {
  stroke: #e89c45;
}
.warp-grid {
  margin: 8px 0 0 292px;
  width: 256px;
  display: grid;
  grid-template-columns: 108px 42px 106px;
  grid-template-rows: 26px 26px;
  row-gap: 4px;
}
.warp {
  height: 22px;
  align-self: center;
  border: 2px solid #e89c45;
  color: #e89c45;
  font: 700 15px/18px "Liberation Mono", monospace;
  letter-spacing: 2.500px;
  text-align: center;
}
.warp-as {
  color: #999;
  padding: 1px 0 0 14px;
}
.pill {
  border: 2px solid #3d3d3d;
  border-radius: 13px;
  text-align: center;
  line-height: 22px;
  color: #aaa;
}
.beat {
  color: #e89c45;
}
.beats {
  grid-column: 1 / 3;
  display: flex;
  align-items: center;
  padding-left: 4px;
  color: #888;
}
.beats span {
  width: 88px;
}
.beats i {
  width: 0;
  height: 0;
  border-left: 5px solid transparent;
  border-right: 5px solid transparent;
  border-top: 6px solid #999;
}
.pills {
  display: flex;
  gap: 5px;
}
.half {
  width: 49px;
}
.dbl {
  width: 52px;
}
.adsr {
  display: flex;
  margin-left: -26px;
  padding-top: 2px;
  font-weight: 600;
}
.env {
  width: 120px;
  flex: none;
  display: flex;
  flex-direction: column;
  align-items: flex-start;
}
.env span {
  height: 24px;
  margin-bottom: 6px;
}
.env-a span {
  padding-left: 5px;
}
.knob-s {
  width: 40px;
  height: 40px;
  margin-left: -1px;
}
.k-on,
.k-off,
.k-needle {
  fill: none;
  stroke-width: 4;
}
.k-on {
  stroke: #5cb2d3;
}
.k-off,
.k-needle {
  stroke: #0c0c0c;
}
.dev-meter {
  width: 22px;
  flex: none;
  display: flex;
  gap: 1px;
  padding: 148px 5px 0 5px;
  height: 230px;
}
.thin .seg {
  height: 6px;
}
.thin .seg.main {
  height: auto;
}

/* EQ */
.eq {
  flex: 1;
  min-width: 0;
  background: #535353;
  border-top-left-radius: 12px;
  overflow: hidden;
}
.eq-head {
  height: 34px;
  display: flex;
  align-items: center;
  padding-left: 6px;
  gap: 7px;
}
.eq-power {
  width: 26px;
  height: 26px;
  border-radius: 50%;
  border: 2px solid #111;
  background: #e89c45;
  flex: none;
}
.play {
  width: 24px;
  height: 24px;
  margin: 0;
}
.eq-name {
  font-weight: 700;
  margin-left: 2px;
}
.eq-body {
  display: flex;
  gap: 4px;
  padding-left: 4px;
  height: 316px;
}
.eq-knobs {
  width: 96px;
  flex: none;
  background: #3e3e3e;
  border-radius: 8px 8px 0 0;
  display: flex;
  flex-direction: column;
  align-items: center;
  padding-top: 2px;
}
.k-label {
  height: 26px;
  flex: none;
  font-weight: 600;
}
.k-label.gain {
  margin-top: 10px;
}
.k-label.q {
  margin-top: 12px;
}
.k-mark {
  width: 0;
  height: 0;
  flex: none;
  border-left: 7px solid transparent;
  border-right: 7px solid transparent;
  border-top: 7px solid #5cb2d3;
  margin-top: -1px;
}
.knob {
  width: 56px;
  height: 56px;
  flex: none;
  margin-left: 2px;
}
.k-label + .knob {
  margin-top: -2px;
}
.k-label.q + .knob {
  margin-top: -4px;
}
.k-mark + .knob {
  margin-top: 2px;
}
.k-value {
  height: 26px;
  flex: none;
  white-space: nowrap;
}
.freq-v {
  margin-top: -8px;
}
.gain-v {
  margin-top: -2px;
}
.eq-center {
  width: 748px;
  flex: none;
}
.eq-graph {
  display: block;
  background: #050505;
  border-radius: 8px 8px 0 0;
}
.eq-db {
  font: 500 20px Inter, sans-serif;
  fill: #8a8a8a;
  text-anchor: end;
}
.eq-hz {
  font: 500 20px Inter, sans-serif;
  fill: #9a9a9a;
  text-anchor: middle;
}
.eq-ring {
  fill: none;
  stroke: #e89c45;
  stroke-width: 2;
}
.eq-dot {
  font: 500 15px Inter, sans-serif;
  fill: #e89c45;
  text-anchor: middle;
}
.eq-dot.dark {
  fill: #111;
}
.f-tabs {
  display: flex;
  gap: 4px;
  margin-top: 4px;
}
.f-tab {
  width: 90px;
  height: 44px;
  flex: none;
  background: #3e3e3e;
  border-radius: 8px 8px 0 0;
  padding: 6px 8px;
}
.f-tab.active {
  background: #535353;
}
.f-box {
  height: 26px;
  border: 2px solid #111;
  background: #3e3e3e;
  display: flex;
  align-items: center;
  justify-content: space-between;
  padding: 0 2px 0 4px;
  color: #eee;
}
.active .f-box {
  background: #222;
}
.f-box::after {
  content: "";
  width: 0;
  height: 0;
  border-left: 7px solid transparent;
  border-right: 7px solid transparent;
  border-top: 11px solid #eee;
}
.f-ic {
  width: 30px;
  height: 18px;
}
.eq-side {
  flex: 1;
  min-width: 0;
  background: #3e3e3e;
  border-top-left-radius: 8px;
  padding: 12px 0 0 6px;
  display: flex;
  flex-direction: column;
  overflow: hidden;
  white-space: nowrap;
}
.side-box {
  width: 80px;
  height: 26px;
  flex: none;
  border: 2px solid #111;
  background: #4a4a4a;
  line-height: 22px;
  padding-left: 2px;
}
.side-box.hp {
  display: flex;
  align-items: center;
  padding-left: 9px;
}
.side-box.dark {
  background: #222;
}
.side-box.amber {
  background: #e89c45;
  color: #111;
  text-align: center;
}
.side-box.tealish {
  background: #3b7285;
  padding-left: 8px;
}
.side-label {
  height: 30px;
  flex: none;
  font-weight: 700;
  line-height: 34px;
}
.side-label.tall {
  height: 32px;
  line-height: 38px;
}
.side-label.taller {
  height: 34px;
  line-height: 42px;
}
```
